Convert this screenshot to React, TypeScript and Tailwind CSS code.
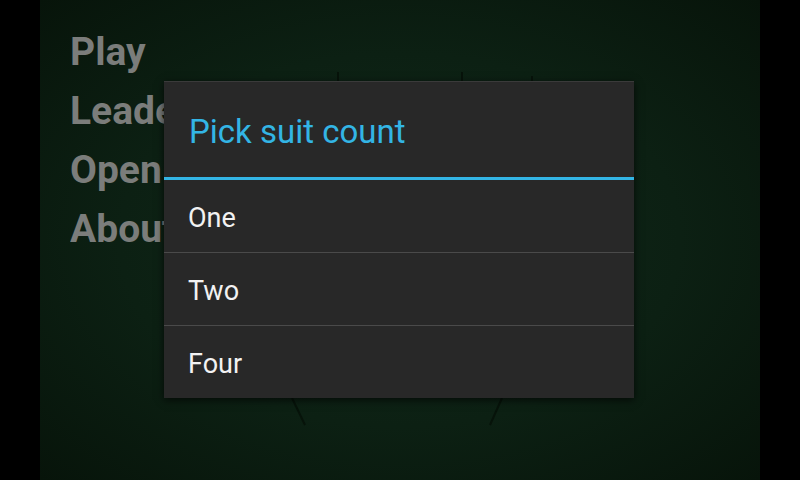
import React from 'react';

const MENU = ['Play', 'Leaderboard', 'Open', 'About'];
const OPTIONS = ['One', 'Two', 'Four'];

const App: React.FC = () => {
  return (
    <div className="w-[800px] h-[480px] flex bg-black overflow-hidden font-['Roboto',sans-serif]">
      <div className="w-[40px] bg-black" />
      <div className="relative w-[720px] h-full bg-[radial-gradient(ellipse_at_center,#11291a_0%,#0c2013_55%,#07140a_100%)]">
        {/* menu behind the dim, cut off where the dialog covers it */}
        <div className="ml-[30px] w-[94px] overflow-hidden whitespace-nowrap flex flex-col pt-[23px] text-[39px] leading-[59px] font-bold text-[#7b7d7b]">
          {MENU.map((m) => (
            <span key={m}>{m}</span>
          ))}
        </div>

        {/* faint card edges peeking out */}
        <svg className="absolute inset-0" width="720" height="480">
          <g stroke="#061008" strokeWidth="2" opacity="0.8">
            <line x1="298" y1="72" x2="298" y2="84" />
            <line x1="422" y1="72" x2="422" y2="84" />
            <line x1="492" y1="76" x2="492" y2="84" />
            <line x1="252" y1="398" x2="265" y2="425" />
            <line x1="462" y1="398" x2="450" y2="425" />
          </g>
        </svg>

        {/* dialog */}
        <div className="absolute left-[124px] top-[81px] w-[470px] h-[317px] flex flex-col bg-[#282828] border-t border-[#3a3a3a] shadow-[0_2px_8px_rgba(0,0,0,0.7)]">
          <div className="h-[95px] pt-[31px] pl-[25px] text-[33px] leading-[38px] text-[#33b5e5]">
            Pick suit count
          </div>
          <div className="h-[3px] bg-[#33b5e5]" />
          {OPTIONS.map((o, i) => (
            <div
              key={o}
              className={
                i < OPTIONS.length - 1
                  ? 'h-[73px] pt-[22px] pl-[24px] text-[27px] leading-[32px] text-[#f2f2f2] border-b border-[#4a4a4a]'
                  : 'h-[71px] pt-[22px] pl-[24px] text-[27px] leading-[32px] text-[#f2f2f2]'
              }
            >
              {o}
            </div>
          ))}
        </div>
      </div>
      <div className="w-[40px] bg-black" />
    </div>
  );
};

export default App;
